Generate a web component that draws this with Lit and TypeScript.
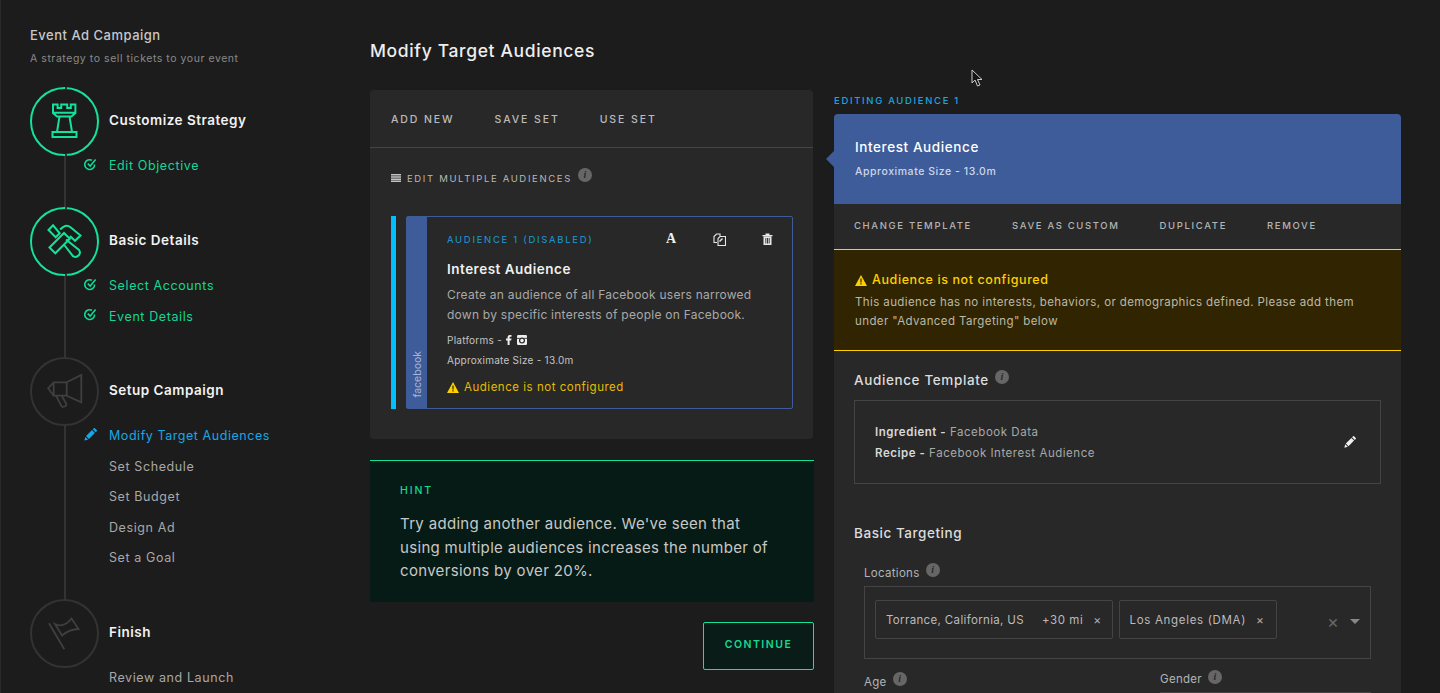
import { LitElement, html, css, svg } from "lit";
import { customElement } from "lit/decorators.js";

const check = html`<svg class="ico" width="13" height="13" viewBox="0 0 13 13" fill="none" stroke="currentColor" stroke-width="1.6"><path d="M10.600 6.600a4.900 4.900 0 1 1-2.600-4.300"/><path d="M3.800 5.600l2.400 2.400L11.600 1.600"/></svg>`;
const pencil = html`<svg class="ico" width="13" height="13" viewBox="0 0 13 13" fill="currentColor"><path d="M0.400 12.600l0.900-3.700 2.800 2.800zM2 8.100l6-6 2.900 2.900-6 6zM8.800 1.300l1-1a.8.8 0 0 1 1.100 0l1.800 1.800a.8.8 0 0 1 0 1.100l-1 1z"/></svg>`;
const warnTri = html`<svg class="tri" width="12" height="11" viewBox="0 0 12 11"><path d="M6 0L12 11H0z" fill="#ffd000"/><path d="M5.400 3.600h1.200v4H5.400zM5.400 8.300h1.200v1.200H5.400z" fill="#2a2200"/></svg>`;
const info = html`<span class="info">i</span>`;

const rook = svg`<path d="M23 17.500h4.600v3.600h3.600v-3.600h6v3.600h3.600v-3.600h4.600v8.600l-4 3.400H27l-4-3.400zM23.500 25.800h21.500M29.500 29.500L27 45M39.500 29.500L42 45M22.500 45h24v5h-24z"/>`;
const tools = svg`<path d="M19.500 40.500L34 26l5.800 5.800L25.300 46.300zM30.200 22.500c3-3.700 7-5 10-2.500l10.300 8.500-5.500 5.300-5-4.800M18.500 23l4.600-4.700 6.600 8-4 4zM36 32.500L49 43a4.400 4.400 0 0 1-6 6.200L33.500 37"/>`;
const horn = svg`<path d="M36.700 25.300L51.300 18v27.300L36.700 38.700zM36.700 25.300h-13l-5.600 6 5.600 7.400h13zM23.700 25.300v13.400M26 38.700l5.500 10.400c1.500 1.600 5.200.1 5-1.900L31.700 38.700"/>`;
const flag = svg`<path d="M19 24.300l15.300 26M25 25c6 3 11 1.500 16.500-5.500l7 10.500c-5 0-11 2-16.500 6.500z"/>`;

@customElement("app-root")
export class AppRoot extends LitElement {
  static styles = css`
    :host { display: block; width: 1440px; height: 693px; overflow: hidden; position: relative; background: #1c1c1c; color: #ccc; font-family: Inter, "Liberation Sans", sans-serif; }
    * { box-sizing: border-box; }
    .page { display: flex; height: 693px; overflow: hidden; border-left: 1px solid #2a2a2a; }
    .side { width: 369px; flex: none; padding: 28px 0 0 29px; }
    .camp { font-size: 13px; line-height: 15px; font-weight: 500; color: #c8c8c8; letter-spacing: .5px; }
    .sub { margin-top: 9px; font-size: 10.500px; line-height: 13px; color: #8a8a8a; letter-spacing: .55px; }
    .steps { margin-top: 22px; }
    .head { display: flex; align-items: center; gap: 10px; height: 69px; }
    .circle { width: 69px; height: 69px; flex: none; border-radius: 50%; border: 2px solid #333; position: relative; color: #3f3f3f; }
    .circle.on { border-color: #12e29a; color: #12e29a; }
    .circle::before, .circle::after { content: ""; position: absolute; left: 32.500px; width: 2px; height: 2px; background: #333; }
    .circle::before { top: -2px; }
    .circle::after { bottom: -2px; }
    .circle svg { position: absolute; left: -2px; top: -2px; fill: none; stroke: currentColor; stroke-width: 1.800; stroke-linejoin: miter; }
    .circle.on svg { stroke-width: 2; }
    .ttl { font-size: 13.500px; font-weight: 600; color: #f2f2f2; letter-spacing: .5px; padding-bottom: 3px; }
    .body { display: flex; }
    .line { width: 2px; flex: none; margin-left: 34px; background: #333; }
    .items { margin: -5.800px 0 0 18px; display: flex; flex-direction: column; }
    .item { height: 30.600px; display: flex; align-items: center; font-size: 12.500px; color: #a8a8a8; letter-spacing: .6px; white-space: nowrap; }
    .item.g { color: #13d895; }
    .item.b { color: #19a7e3; letter-spacing: .55px; }
    .item .slot { width: 25px; flex: none; display: flex; margin-top: -3px; }
    .item .nopad { width: 25px; flex: none; }
    .main { width: 444px; flex: none; padding-top: 40px; }
    h1 { margin: 0; font-size: 17.500px; line-height: 21px; font-weight: 500; color: #eee; letter-spacing: .65px; }
    .card { margin-top: 29px; height: 349px; background: #282828; border-radius: 4px; width: 443px; }
    .tabs { display: flex; align-items: center; gap: 40px; height: 58px; padding: 1px 0 0 21px; border-bottom: 1px solid #444; font-size: 10.500px; font-weight: 500; letter-spacing: 1.900px; color: #bbb; }
    .multi { display: flex; align-items: center; margin: 21px 0 0 21px; height: 18px; font-size: 9.500px; letter-spacing: 1.650px; color: #b8b8b8; }
    .multi svg { margin-right: 6px; }
    .info { display: inline-flex; width: 14px; height: 14px; border-radius: 50%; background: #666; color: #2a2a2a; align-items: center; justify-content: center; font: italic 700 10px/14px "Liberation Serif", serif; letter-spacing: 0; margin-left: 6px; transform: translateY(-3px); flex: none; }
    .aud { display: flex; margin: 29px 0 0 21px; height: 193px; }
    .bar { width: 5px; background: #00bfff; flex: none; }
    .aud-card { margin-left: 10px; width: 387px; display: flex; border: 1px solid #3d5c99; border-radius: 2px; }
    .fb { width: 20px; background: #3d5c99; flex: none; display: flex; align-items: flex-end; justify-content: center; padding-bottom: 10px; }
    .fb span { writing-mode: vertical-rl; transform: rotate(180deg); font-size: 10.500px; color: #a5b6d8; }
    .aud-body { padding: 13px 0 0 20px; flex: 1; }
    .aud-top { display: flex; align-items: center; height: 18px; }
    .aud-label { font-size: 9.500px; letter-spacing: 1.700px; color: #1a9cd8; width: 200px; white-space: nowrap; }
    .acts { display: flex; align-items: center; }
    .act { width: 48px; display: flex; justify-content: center; color: #eee; }
    .serifA { font: 700 14px/14px "Liberation Serif", serif; color: #eee; }
    .aud-name { margin-top: 13px; font-size: 13.500px; line-height: 17px; font-weight: 600; color: #f0f0f0; letter-spacing: .5px; }
    .desc { margin-top: 7px; font-size: 12px; line-height: 20px; color: #a8a8a8; letter-spacing: .25px; white-space: nowrap; }
    .meta { font-size: 10px; line-height: 20px; color: #c4c4c4; letter-spacing: .25px; display: flex; align-items: center; gap: 4px; }
    .meta.first { margin-top: 5px; }
    .warn { margin-top: 8px; display: flex; align-items: center; gap: 5px; font-size: 11.500px; line-height: 18px; color: #e4bd00; letter-spacing: .52px; }
    .hint { margin-top: 21px; height: 142px; border-top: 1px solid #12e29a; background: #061b15; padding: 22px 30px 0; }
    .hint-t { font-size: 10.500px; line-height: 16px; letter-spacing: 1.900px; color: #14d894; font-weight: 500; }
    .hint-b { margin-top: 13px; font-size: 15px; line-height: 23.500px; color: #c8c8c8; letter-spacing: .32px; white-space: nowrap; }
    .foot { display: flex; justify-content: flex-end; margin-top: 20px; }
    .cont { width: 111px; height: 48px; border: 1px solid #12e29a; background: #0a1c17; border-radius: 2px; display: flex; align-items: center; justify-content: center; padding-bottom: 3px; font-size: 10.500px; font-weight: 600; letter-spacing: 1.500px; color: #14d894; }
    .right { width: 567px; flex: none; margin-left: 20px; padding-top: 94px; }
    .edit-l { font-size: 9.500px; line-height: 13px; font-weight: 500; letter-spacing: 1.670px; color: #17a8e0; }
    .panel { margin-top: 7px; background: #282828; border-radius: 4px 4px 0 0; position: relative; height: 600px; }
    .blue { height: 90px; background: #3d5c99; border-radius: 4px 4px 0 0; padding: 24px 0 0 21px; position: relative; }
    .blue::before { content: ""; position: absolute; left: -8px; top: 37px; border: 8px solid transparent; border-left: 0; border-right-color: #3d5c99; }
    .blue-t { font-size: 13.500px; line-height: 18px; font-weight: 500; color: #fff; letter-spacing: .6px; }
    .blue-s { margin-top: 9px; font-size: 10.500px; line-height: 14px; font-weight: 500; color: #cdd7ea; letter-spacing: .55px; }
    .tabs2 { display: flex; align-items: center; height: 45px; padding: 0 0 2px 20px; gap: 40px; font-size: 9.500px; font-weight: 500; letter-spacing: 1.650px; color: #b4b4b4; }
    .alert { height: 102px; background: #302500; border-top: 1px solid #ffd000; border-bottom: 1px solid #ffd000; padding: 21px 0 0 21px; }
    .alert-t { display: flex; align-items: center; gap: 5px; font-size: 12.500px; line-height: 18px; font-weight: 500; color: #ffd000; letter-spacing: .6px; }
    .alert-b { margin-top: 4px; font-size: 11.500px; line-height: 19px; color: #bcb8a8; letter-spacing: .4px; white-space: nowrap; }
    .sec { display: flex; align-items: center; margin: 20px 0 0 20px; height: 18px; font-size: 13.500px; font-weight: 500; color: #ddd; letter-spacing: .62px; }
    .box { margin: 11px 20px 0; height: 84px; border: 1px solid #444; display: flex; align-items: center; justify-content: space-between; padding: 2px 24px 0 20px; font-size: 11.500px; line-height: 21px; color: #a8a8a8; letter-spacing: .53px; }
    .box b { color: #d8d8d8; font-weight: 600; }
    .box svg { color: #eee; margin-top: -2px; }
    .sec2 { margin: 40px 0 0 20px; height: 18px; line-height: 18px; font-size: 13.500px; font-weight: 500; color: #ddd; letter-spacing: .55px; }
    .lab { display: flex; align-items: center; margin: 23px 0 0 30px; height: 15px; font-size: 11.500px; color: #b4b4b4; letter-spacing: .3px; }
    .sel { margin: 6px 30px 0; height: 73px; border: 1px solid #444; display: flex; padding: 13px 0 0 10px; gap: 6px; position: relative; }
    .chip { height: 39px; border: 1px solid #444; border-radius: 2px; display: flex; align-items: center; padding: 0 10px 0 10px; font-size: 11.500px; color: #bbb; letter-spacing: .35px; white-space: nowrap; }
    .chip.wide { letter-spacing: .68px; padding-right: 11px; }
    .chip .x { color: #aaa; font-size: 12px; margin-left: 10px; }
    .chip .r { margin-left: 18px; letter-spacing: .55px; }
    .sel-end { margin-left: auto; display: flex; align-items: center; gap: 11px; height: 42px; padding-right: 10px; color: #666; font-size: 18px; }
    .caret { width: 0; height: 0; border: 5px solid transparent; border-bottom: 0; border-top: 5px solid #888; }
    .two { display: flex; margin: 11px 0 0 30px; }
    .two .a { width: 296px; display: flex; align-items: center; height: 20px; font-size: 11.500px; color: #b4b4b4; letter-spacing: .3px; padding-top: 4px; }
    .two .g { flex: none; width: 211px; height: 23px; padding-top: 1px; display: flex; align-items: flex-start; line-height: 16px; font-size: 11.500px; color: #b4b4b4; letter-spacing: .3px; border-bottom: 1px solid #444; }
    .two .g .info { transform: translateY(0); margin-top: -1px; }
    .cursor { position: absolute; left: 971px; top: 69px; }
  `;

  private step(icon: unknown, title: string, on: boolean, body: number, items: unknown, last = false) {
    return html`<div class="step">
      <div class="head">
        <div class="circle ${on ? "on" : ""}"><svg width="69" height="69" viewBox="0 0 69 69">${icon}</svg></div>
        <div class="ttl">${title}</div>
      </div>
      <div class="body" style="height:${body}px">
        ${last ? html`<div class="line" style="background:transparent"></div>` : html`<div class="line"></div>`}
        <div class="items">${items}</div>
      </div>
    </div>`;
  }

  private item(text: string, kind: string) {
    const cls = kind === "c" ? "g" : kind === "p" ? "b" : "";
    return html`<div class="item ${cls}">
      ${kind === "c" ? html`<span class="slot">${check}</span>` : kind === "p" ? html`<span class="slot">${pencil}</span>` : html`<span class="nopad"></span>`}
      ${text}
    </div>`;
  }

  render() {
    return html`
      <div class="page">
        <aside class="side">
          <div class="camp">Event Ad Campaign</div>
          <div class="sub">A strategy to sell tickets to your event</div>
          <div class="steps">
            ${this.step(rook, "Customize Strategy", true, 51, this.item("Edit Objective", "c"))}
            ${this.step(tools, "Basic Details", true, 81, [this.item("Select Accounts", "c"), this.item("Event Details", "c")])}
            ${this.step(horn, "Setup Campaign", false, 173, [this.item("Modify Target Audiences", "p"), this.item("Set Schedule", ""), this.item("Set Budget", ""), this.item("Design Ad", ""), this.item("Set a Goal", "")])}
            ${this.step(flag, "Finish", false, 40, this.item("Review and Launch", ""), true)}
          </div>
        </aside>
        <section class="main">
          <h1>Modify Target Audiences</h1>
          <div class="card">
            <div class="tabs"><span>ADD NEW</span><span>SAVE SET</span><span>USE SET</span></div>
            <div class="multi">
              <svg width="10" height="8" viewBox="0 0 10 8" fill="#c4c4c4"><path d="M0 0h10v1.500H0zM0 2.200h10v1.500H0zM0 4.400h10v1.500H0zM0 6.500h10V8H0z"/></svg>
              EDIT MULTIPLE AUDIENCES${info}
            </div>
            <div class="aud">
              <div class="bar"></div>
              <div class="aud-card">
                <div class="fb"><span>facebook</span></div>
                <div class="aud-body">
                  <div class="aud-top">
                    <div class="aud-label">AUDIENCE 1 (DISABLED)</div>
                    <div class="acts">
                      <span class="act"><span class="serifA">A</span></span>
                      <span class="act"><svg width="13" height="13" viewBox="0 0 13 13" fill="none" stroke="#e8e8e8" stroke-width="1.100"><path d="M4 9.500H1V3.500L3.500 1H7v2"/><path d="M5 12.500V5.500L7 3.500h5.500v9z"/><path d="M6.500 8.500l3-3" stroke-width="1.400"/></svg></span>
                      <span class="act"><svg width="11" height="12" viewBox="0 0 11 12" fill="#e8e8e8"><path d="M0.500 2h10v1.200H0.500zM3.500 0.500h4V2h-4zM1.500 3.500h8V12h-8z"/><path d="M3.400 5h.9v5.500h-.9zM5 5h.9v5.500H5zM6.700 5h.9v5.500h-.9z" fill="#282828"/></svg></span>
                    </div>
                  </div>
                  <div class="aud-name">Interest Audience</div>
                  <div class="desc">Create an audience of all Facebook users narrowed<br />down by specific interests of people on Facebook.</div>
                  <div class="meta first">Platforms -
                    <svg width="6" height="10" viewBox="0 0 6 10" fill="#eee"><path d="M1.600 10V5.400H0V3.600h1.600V2.300C1.600.8 2.500 0 3.900 0H5.500v1.700h-1c-.7 0-.9.300-.9.900v1h1.900l-.3 1.800H3.600V10z"/></svg>
                    <svg width="10" height="10" viewBox="0 0 9 9" style="margin-left:1px"><rect width="9" height="9" rx="1.200" fill="#eee"/><circle cx="4.500" cy="5" r="2.200" fill="none" stroke="#282828" stroke-width="1.100"/><path d="M0 3h2.500M6.500 3H9" stroke="#282828" stroke-width=".8"/></svg>
                  </div>
                  <div class="meta">Approximate Size - 13.0m</div>
                  <div class="warn">${warnTri}Audience is not configured</div>
                </div>
              </div>
            </div>
          </div>
          <div class="hint">
            <div class="hint-t">HINT</div>
            <div class="hint-b">Try adding another audience. We've seen that<br />using multiple audiences increases the number of<br />conversions by over 20%.</div>
          </div>
          <div class="foot"><div class="cont">CONTINUE</div></div>
        </section>
        <section class="right">
          <div class="edit-l">EDITING AUDIENCE 1</div>
          <div class="panel">
            <div class="blue">
              <div class="blue-t">Interest Audience</div>
              <div class="blue-s">Approximate Size - 13.0m</div>
            </div>
            <div class="tabs2"><span>CHANGE TEMPLATE</span><span>SAVE AS CUSTOM</span><span>DUPLICATE</span><span>REMOVE</span></div>
            <div class="alert">
              <div class="alert-t">${warnTri}Audience is not configured</div>
              <div class="alert-b">This audience has no interests, behaviors, or demographics defined. Please add them<br />under "Advanced Targeting" below</div>
            </div>
            <div class="sec">Audience Template${info}</div>
            <div class="box">
              <div><b>Ingredient -</b> Facebook Data<br /><b>Recipe -</b> Facebook Interest Audience</div>
              <svg width="12" height="12" viewBox="0 0 13 13" fill="currentColor"><path d="M0.400 12.600l0.900-3.700 2.800 2.800zM2 8.100l6-6 2.900 2.900-6 6zM8.800 1.300l1-1a.8.8 0 0 1 1.100 0l1.800 1.800a.8.8 0 0 1 0 1.100l-1 1z"/></svg>
            </div>
            <div class="sec2">Basic Targeting</div>
            <div class="lab">Locations${info}</div>
            <div class="sel">
              <div class="chip">Torrance, California, US<span class="r">+30 mi</span><span class="x">×</span></div>
              <div class="chip wide">Los Angeles (DMA)<span class="x">×</span></div>
              <div class="sel-end"><span>×</span><span class="caret"></span></div>
            </div>
            <div class="two">
              <div class="a">Age${info}</div>
              <div class="g">Gender${info}</div>
            </div>
          </div>
        </section>
      </div>
      <svg class="cursor" width="12" height="19" viewBox="0 0 12 19"><path d="M1 1v13l3-3 2.500 6 2.500-1-2.500-5.500H11z" fill="#141414" stroke="#ccc" stroke-width="1"/></svg>
    `;
  }
}
